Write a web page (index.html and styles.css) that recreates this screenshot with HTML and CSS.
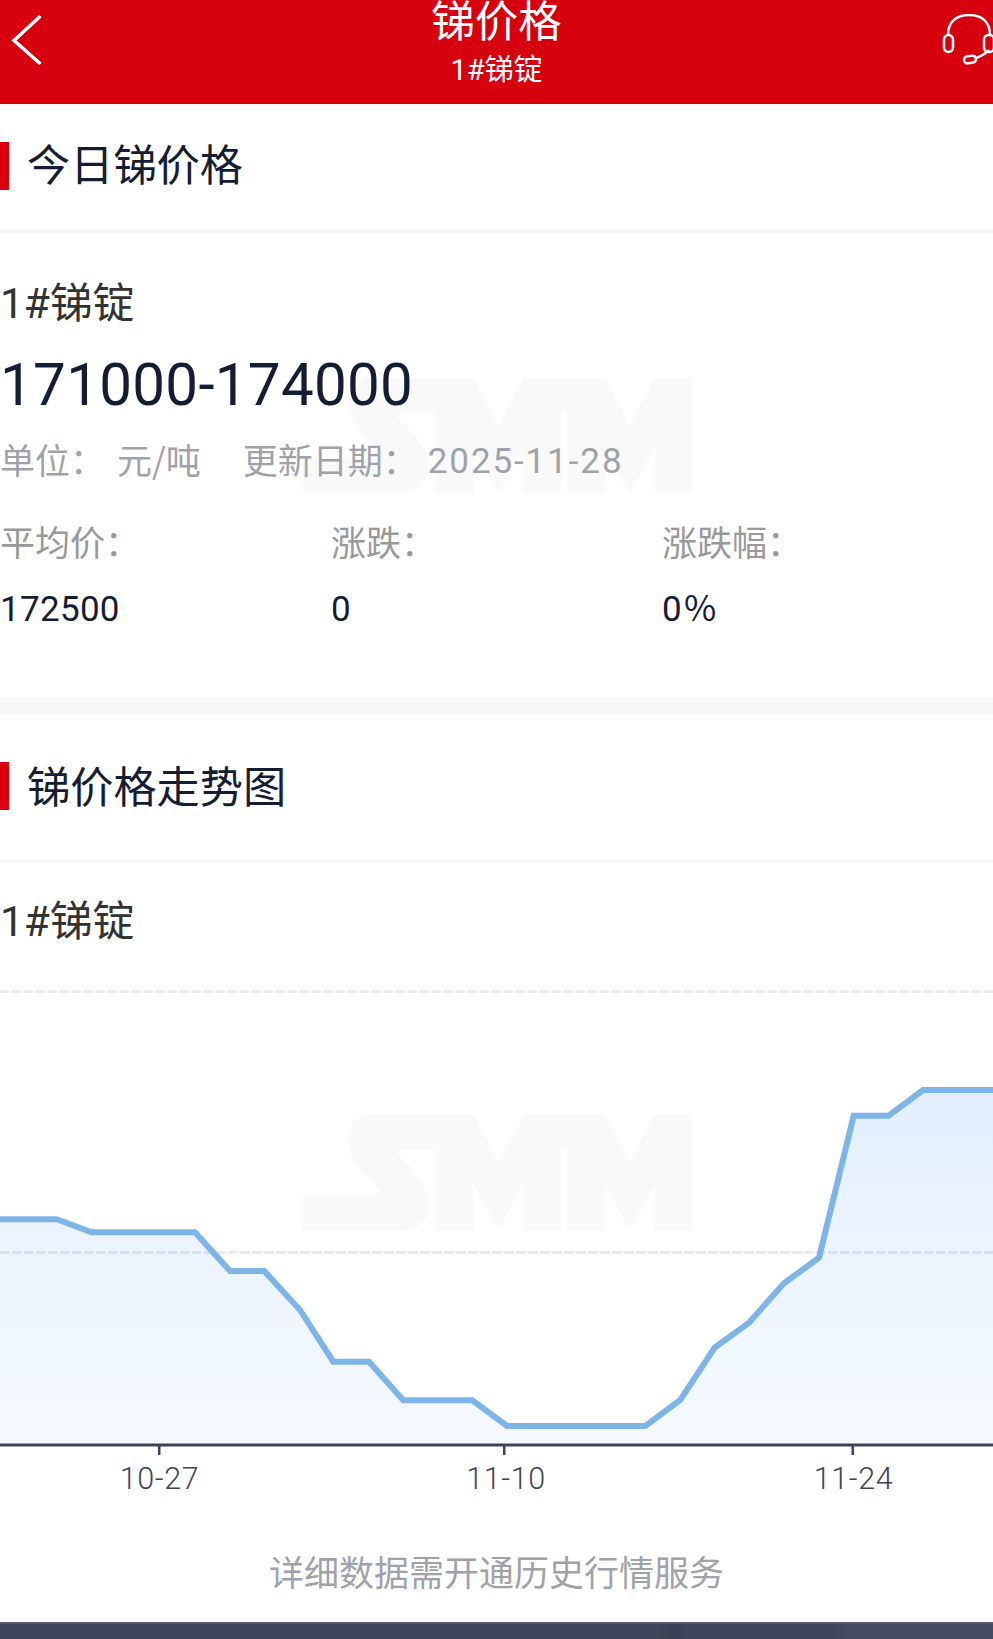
FILE: index.html
```html
<!DOCTYPE html>
<html lang="zh-CN">
<head>
<meta charset="utf-8">
<title>锑价格</title>
<link rel="stylesheet" href="styles.css">
</head>
<body>
<div class="page">
  <header class="topbar">
    <svg class="back-icon" viewBox="0 0 32 52" aria-hidden="true"><path d="M29.500 2 3 26.500 29.500 50"/></svg>
    <div class="topbar-titles">
      <div class="topbar-title">锑价格</div>
      <div class="topbar-sub"><span class="num">1#</span>锑锭</div>
    </div>
    <svg class="headset-icon" viewBox="0 0 60 60" aria-hidden="true">
      <path d="M6 21C6 8 14 1 27 1S48 8 48 21"/>
      <rect x="2" y="21" width="9" height="17" rx="4.500"/>
      <rect x="42" y="21" width="10" height="17" rx="4.500"/>
      <path d="M47 36C44 40 39 42 33 44.500"/>
      <rect x="22" y="42" width="12" height="7" rx="3.500" transform="rotate(-8 28 45.500)"/>
    </svg>
  </header>

  <section class="card">
    <h2 class="section-head"><span class="bar"></span>今日锑价格</h2>
    <div class="price-body">
      <svg class="watermark watermark-top" viewBox="0 0 1168 348" aria-hidden="true"><use href="#smm"/></svg>
      <div class="product"><span class="num">1#</span>锑锭</div>
      <div class="price num">171000-174000</div>
      <div class="meta">
        <span class="meta-label">单位：</span><span class="meta-value">元/吨</span>
        <span class="meta-label meta-date">更新日期：</span><span class="meta-value date num">2025-11-28</span>
      </div>
      <div class="stats">
        <div class="stat"><div class="stat-label">平均价：</div><div class="stat-value num">172500</div></div>
        <div class="stat"><div class="stat-label">涨跌：</div><div class="stat-value num">0</div></div>
        <div class="stat"><div class="stat-label">涨跌幅：</div><div class="stat-value num">0<span class="percent">%</span></div></div>
      </div>
    </div>
  </section>

  <div class="band"></div>

  <section class="card">
    <h2 class="section-head section-head-tall"><span class="bar"></span>锑价格走势图</h2>
    <div class="product product-chart"><span class="num">1#</span>锑锭</div>
    <svg class="chart" viewBox="0 0 993 550" aria-label="锑价格走势图">
      <defs>
        <linearGradient id="area" gradientUnits="userSpaceOnUse" x1="0" y1="130" x2="0" y2="484">
          <stop offset="0" stop-color="#e3effe"/>
          <stop offset="1" stop-color="#f6faff"/>
        </linearGradient>
        <symbol id="smm" viewBox="68 75 1168 348">
          <path d="M270 75H580L655 218 730 75H975L1048 218 1125 75H1236V422H1125V280L1048 422 975 280V422H862V178H844V422H730V280L655 422 580 280V422H466V178H365C350 178 345 190 360 205 400 240 445 290 445 345 445 395 400 422 350 422H68V318H280C300 318 305 300 290 290 250 250 205 210 205 150 205 100 235 75 270 75Z"/>
        </symbol>
      </defs>
      <svg class="watermark-chart" x="303" y="155" width="389" height="116" viewBox="0 0 1168 348"><use href="#smm"/></svg>
      <path class="area" d="M0 259.300H56.700L91.700 272.300H195L230 311H264.300L300 350 333.300 401.700H369L403.300 440.300H472.300L507 466H645.300L680.300 440 714.700 387.700 749 362.700 784 323.300 819 297.700 853.700 155.700H888.700L923 130H993V484H0Z"/>
      <line class="grid" x1="0" y1="31.500" x2="993" y2="31.500"/>
      <line class="grid" x1="0" y1="292.500" x2="993" y2="292.500"/>
      <path class="line" d="M0 259.300H56.700L91.700 272.300H195L230 311H264.300L300 350 333.300 401.700H369L403.300 440.300H472.300L507 466H645.300L680.300 440 714.700 387.700 749 362.700 784 323.300 819 297.700 853.700 155.700H888.700L923 130H993"/>
      <rect class="axis" x="0" y="483.500" width="993" height="3"/>
      <rect class="axis" x="158" y="486" width="2.500" height="9"/>
      <rect class="axis" x="503" y="486" width="2.500" height="9"/>
      <rect class="axis" x="851.500" y="486" width="2.500" height="9"/>
      <text class="tick" x="159.500" y="528.500" text-anchor="middle">10-27</text>
      <text class="tick" x="506" y="528.500" text-anchor="middle">11-10</text>
      <text class="tick" x="853.500" y="528.500" text-anchor="middle">11-24</text>
    </svg>
    <p class="notice">详细数据需开通历史行情服务</p>
  </section>

  <footer class="footer-bar"></footer>
</div>
</body>
</html>
```
FILE: styles.css
```css
* { box-sizing: border-box; }

html, body {
  margin: 0;
  padding: 0;
  background: #fff;
}

body {
  font-family: "Noto Sans CJK SC", "Liberation Sans", sans-serif;
  overflow: hidden;
}

.num {
  font-family: Roboto, "Noto Sans CJK SC", sans-serif;
}

.page {
  position: relative;
  width: 993px;
  height: 1639px;
  display: flex;
  flex-direction: column;
  overflow: hidden;
}

.topbar {
  position: relative;
  flex: 0 0 104px;
  height: 104px;
  background: #d6000f;
  color: #fff;
  display: flex;
  justify-content: center;
  overflow: hidden;
}

.topbar-titles {
  display: flex;
  flex-direction: column;
  align-items: center;
}

.topbar-title {
  font-size: 43.500px;
  line-height: 42px;
  margin-top: -2px;
}

.topbar-sub {
  font-size: 29px;
  line-height: 36px;
  margin-top: 9px;
}

.back-icon {
  position: absolute;
  left: 11px;
  top: 14px;
  width: 32px;
  height: 52px;
  fill: none;
  stroke: #fff;
  stroke-width: 3.500;
}

.headset-icon {
  position: absolute;
  left: 942px;
  top: 14px;
  width: 60px;
  height: 60px;
  fill: none;
  stroke: #fff;
  stroke-width: 2.500;
}

.card {
  position: relative;
  background: #fff;
}

.section-head {
  position: relative;
  margin: 0;
  height: 129px;
  display: flex;
  align-items: center;
  padding: 0 0 11px 27px;
  font-size: 43.200px;
  line-height: 48px;
  font-weight: 400;
  color: #141d33;
  border-bottom: 3px solid #f3f5f9;
}

.section-head-tall {
  height: 149px;
  padding-bottom: 7px;
}

.bar {
  position: absolute;
  left: 0;
  top: 38px;
  width: 9px;
  height: 48px;
  background: #d6000f;
}

.section-head-tall .bar {
  top: 48px;
}

.price-body {
  position: relative;
  height: 464px;
  padding-top: 43px;
}

.watermark {
  position: absolute;
  fill: #f9f9f9;
}

.watermark-top {
  left: 303px;
  top: 145px;
  width: 389px;
  height: 116px;
}

.watermark-chart {
  fill: #f9f9f9;
}

.product {
  position: relative;
  font-size: 42.400px;
  line-height: 48px;
  color: #333;
}

.price {
  position: relative;
  font-size: 58.300px;
  line-height: 70px;
  letter-spacing: 0.300px;
  color: #141d33;
  margin-top: 22px;
}

.meta {
  position: relative;
  display: flex;
  font-size: 35px;
  line-height: 44px;
  color: #9fa2ab;
  margin-top: 17px;
}

.meta-label {
  margin-right: 12px;
}

.meta-date {
  margin-left: 42px;
  margin-right: 10px;
}

.date {
  padding-top: 3px;
  letter-spacing: 1.900px;
}

.stats {
  position: relative;
  display: grid;
  grid-template-columns: 331px 331px 331px;
  margin-top: 35px;
}

.stat-label {
  font-size: 35px;
  line-height: 44px;
  color: #999;
}

.stat-value {
  font-size: 35px;
  line-height: 44px;
  letter-spacing: 0.300px;
  color: #141d33;
  margin-top: 25px;
}

.percent {
  font-family: "Noto Sans CJK SC", sans-serif;
  line-height: 0;
  margin-left: 2px;
}

.band {
  flex: 0 0 17px;
  background: #f6f7f9;
}

.product-chart {
  margin-top: 31px;
}

.chart {
  display: block;
  width: 993px;
  height: 550px;
  margin-top: 14px;
  overflow: visible;
}

.grid {
  stroke: rgba(60, 60, 120, 0.11);
  stroke-width: 3;
  stroke-dasharray: 9 3;
}

.area {
  fill: url(#area);
}

.line {
  fill: none;
  stroke: #7eb5e9;
  stroke-width: 6;
  stroke-linejoin: miter;
}

.axis {
  fill: #40445a;
}

.tick {
  font-family: Roboto, "Noto Sans CJK SC", sans-serif;
  font-size: 30.500px;
  font-weight: 300;
  letter-spacing: 0.600px;
  fill: #40445a;
}

.notice {
  margin: 39px 0 0;
  text-align: center;
  font-size: 35px;
  line-height: 44px;
  color: #9fa2ab;
}

.footer-bar {
  position: absolute;
  left: 0;
  top: 1622px;
  width: 993px;
  height: 17px;
  background: linear-gradient(90deg, #40445a 0 660px, #3c3f52 676px, #40445a 684px, #40445a 830px, #454a60 845px);
  border-top: 2px solid #565a6c;
}
```
